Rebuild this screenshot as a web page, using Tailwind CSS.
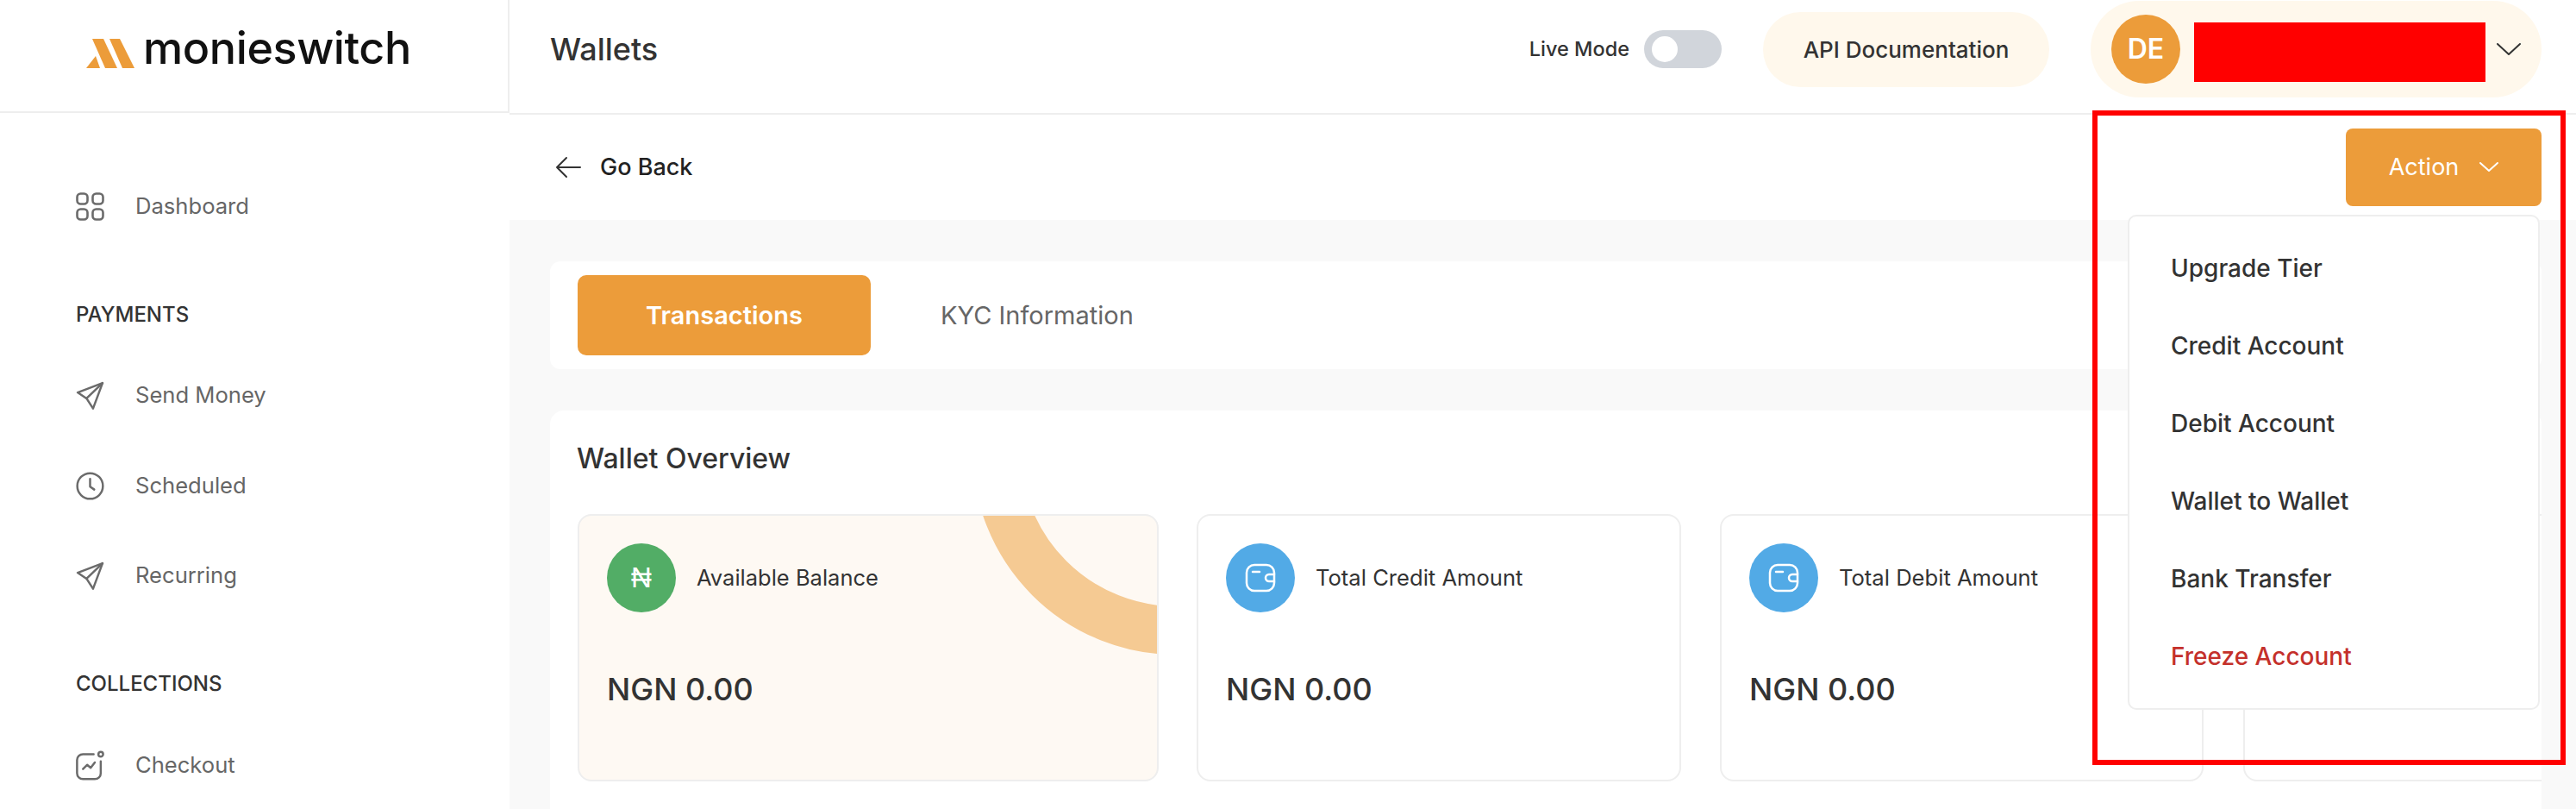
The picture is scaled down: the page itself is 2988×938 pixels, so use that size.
<!DOCTYPE html>
<html lang="en">
<head>
  <meta charset="UTF-8" />
  <title>Monieswitch - Wallets</title>
  <script src="https://cdn.jsdelivr.net/npm/@tailwindcss/browser@4"></script>
</head>
<body class="relative w-[2988px] h-[938px] overflow-hidden bg-white text-[#333333] font-[Inter,sans-serif]">
  <div class="flex h-full">
    <!-- Sidebar -->
    <aside class="w-[591px] shrink-0 flex flex-col">
      <div class="h-[131px] shrink-0 border-b-2 border-r-2 border-[#eeeeee] pl-[100px] flex items-center gap-[10px]">
        <svg width="56" height="34" viewBox="0 0 56 34" class="mt-[-5px]" fill="#ec9c3a"><polygon points="0,34 16,34 11,20" /><polygon points="7,0 20,0 36,34 22,34" /><polygon points="27,0 39,0 56,34 42,34" /></svg>
        <span class="text-[52px] font-medium text-[#111111] leading-none tracking-[-0.4px] mt-[-17px]">monieswitch</span>
      </div>
      <nav class="pl-[88px] pt-[83px] text-[25.6px] text-[#666666]">
        <a class="flex items-center gap-[36px] h-[50px]">
          <svg width="33" height="33" viewBox="0 0 33 33" fill="none" stroke="#6b6b6b" stroke-width="2.6"><rect x="1.5" y="1.5" width="12" height="12" rx="4" /><rect x="19.5" y="1.5" width="12" height="12" rx="4" /><rect x="1.5" y="19.5" width="12" height="12" rx="4" /><rect x="19.5" y="19.5" width="12" height="12" rx="4" /></svg>
          <span>Dashboard</span>
        </a>
        <div class="mt-[81px] h-[40px] flex items-center text-[24px] font-medium text-[#333333]">PAYMENTS</div>
        <a class="mt-[48px] flex items-center gap-[36px] h-[50px]">
          <svg width="33" height="33" viewBox="0 0 24 24" fill="none" stroke="#6b6b6b" stroke-width="1.8" stroke-linejoin="round" stroke-linecap="round"><path d="M22.5 1.5 1.5 9.5l7.5 5 5.5 8.5 8-21.500Z" /><path d="M22.500 1.500 9 14.500" /></svg>
          <span>Send Money</span>
        </a>
        <a class="mt-[55px] flex items-center gap-[36px] h-[50px]">
          <svg width="33" height="33" viewBox="0 0 24 24" fill="none" stroke="#6b6b6b" stroke-width="1.8" stroke-linecap="round" stroke-linejoin="round"><circle cx="12" cy="12" r="10.800" /><path d="M12 6v6.500l3.500 2.500" /></svg>
          <span>Scheduled</span>
        </a>
        <a class="mt-[54px] flex items-center gap-[36px] h-[50px]">
          <svg width="33" height="33" viewBox="0 0 24 24" fill="none" stroke="#6b6b6b" stroke-width="1.8" stroke-linejoin="round" stroke-linecap="round"><path d="M22.5 1.5 1.5 9.5l7.5 5 5.5 8.5 8-21.500Z" /><path d="M22.500 1.500 9 14.500" /></svg>
          <span>Recurring</span>
        </a>
        <div class="mt-[81px] h-[40px] flex items-center text-[24px] font-medium text-[#333333]">COLLECTIONS</div>
        <a class="mt-[49px] flex items-center gap-[36px] h-[50px]">
          <svg width="33" height="35" viewBox="0 0 24 25" fill="none" stroke="#6b6b6b" stroke-width="1.8" stroke-linecap="round" stroke-linejoin="round"><path d="M15 3H6a5 5 0 0 0-5 5v11a5 5 0 0 0 5 5h10a5 5 0 0 0 5-5V9" /><circle cx="21" cy="3" r="2" /><path d="m6 15.500 3.500-3.500 3 2.500 3.500-4.500" /></svg>
          <span>Checkout</span>
        </a>
      </nav>
    </aside>

    <div class="flex-1 min-w-0 flex flex-col">
      <!-- Top bar -->
      <header class="h-[133px] shrink-0 border-b-2 border-[#eeeeee] flex items-start pl-[47px] pr-[40px]">
        <h1 class="text-[36px] font-medium leading-none mt-[39px] text-[#333333]">Wallets</h1>
        <div class="ml-auto flex items-center gap-[48px] h-[114px]">
          <div class="flex items-center gap-[17px]">
            <span class="text-[23.5px] font-medium">Live Mode</span>
            <div class="w-[90px] h-[44px] rounded-full bg-[#d1d5db] flex items-center pl-[9px]">
              <div class="w-[30px] h-[30px] rounded-full bg-white"></div>
            </div>
          </div>
          <button class="w-[332px] h-[87px] rounded-full bg-[#fff8ec] text-[26px] font-medium">API Documentation</button>
          <div class="w-[523px] h-[112px] rounded-full bg-[#fff8ec] flex items-center pl-[24px]">
            <div class="w-[80px] h-[80px] rounded-full bg-[#ec9c3a] text-white text-[32px] font-semibold flex items-center justify-center">DE</div>
            <div class="ml-[16px] mt-[6px] w-[338px] h-[69px] bg-[#ff0000]"></div>
            <svg class="ml-[13px]" width="28" height="14" viewBox="0 0 28 14" fill="none" stroke="#333333" stroke-width="2" stroke-linecap="round" stroke-linejoin="round"><path d="m1 1 13 12L27 1" /></svg>
          </div>
        </div>
      </header>

      <!-- Go back / action row -->
      <div class="h-[122px] shrink-0 flex items-center justify-between pl-[53px] pr-[40px]">
        <a class="flex items-center gap-[22px] text-[27px] font-medium text-[#222222]">
          <svg width="30" height="26" viewBox="0 0 30 26" fill="none" stroke="#333333" stroke-width="2" stroke-linecap="round" stroke-linejoin="round"><path d="M29 13H2M13 2 2 13l11 11" /></svg>
          <span>Go Back</span>
        </a>
        <button class="w-[227px] h-[90px] rounded-[8px] bg-[#ec9c3a] text-white text-[27px] flex items-center justify-center gap-[24px]">
          <span>Action</span>
          <svg width="22" height="12" viewBox="0 0 22 12" fill="none" stroke="#ffffff" stroke-width="2" stroke-linecap="round" stroke-linejoin="round"><path d="m1 1 10 9L21 1" /></svg>
        </button>
      </div>

      <!-- Content -->
      <main class="flex-1 min-h-0 bg-[#f9f9f9] pt-[48px] pl-[47px] pr-[40px]">
        <div class="h-[125px] rounded-[12px] bg-white px-[32px] py-[16px] flex items-center">
          <div class="w-[340px] h-[93px] rounded-[10px] bg-[#ec9c3a] text-white text-[29px] font-semibold flex items-center justify-center">Transactions</div>
          <div class="ml-[81px] text-[29px] text-[#666666]">KYC Information</div>
        </div>
        <section class="mt-[48px] h-[600px] rounded-[16px] bg-white p-[32px] overflow-hidden">
          <h2 class="text-[32px] font-medium leading-[44px] mt-[2px] ml-[-1px]">Wallet Overview</h2>
          <div class="mt-[42px] flex gap-[44px]">
            <div class="relative w-[674px] h-[310px] shrink-0 overflow-hidden rounded-[16px] border-2 border-[#eeeeee] bg-[#fef9f3] px-[32px] pt-[32px]">
              <div class="absolute left-[456px] top-[-311px] w-[472px] h-[472px] rounded-full border-[56px] border-[#f5ca93]"></div>
              <div class="flex items-center gap-[24px]">
                <div class="w-[80px] h-[80px] rounded-full bg-[#52ad66] text-white text-[33px] font-['Liberation_Sans',sans-serif] flex items-center justify-center">₦</div>
                <span class="text-[25.5px]">Available Balance</span>
              </div>
              <div class="mt-[66px] text-[36px] font-medium leading-[46px]">NGN 0.00</div>
            </div>
            <div class="w-[562px] h-[310px] shrink-0 rounded-[16px] border-2 border-[#eeeeee] bg-white px-[32px] pt-[32px]">
              <div class="flex items-center gap-[24px]">
                <div class="w-[80px] h-[80px] rounded-full bg-[#52aae6] flex items-center justify-center">
                  <svg width="36" height="34" viewBox="0 0 36 34" fill="none" stroke="#ffffff" stroke-width="2.500" stroke-linecap="round" stroke-linejoin="round"><rect x="2" y="2" width="32" height="30" rx="9" /><path d="M9 10h8" /><path d="M34 13h-6a4 4 0 0 0 0 8h6" /></svg>
                </div>
                <span class="text-[25.6px]">Total Credit Amount</span>
              </div>
              <div class="mt-[66px] text-[36px] font-medium leading-[46px]">NGN 0.00</div>
            </div>
            <div class="ml-[1px] w-[561px] h-[310px] shrink-0 rounded-[16px] border-2 border-[#eeeeee] bg-white px-[32px] pt-[32px]">
              <div class="flex items-center gap-[24px]">
                <div class="w-[80px] h-[80px] rounded-full bg-[#52aae6] flex items-center justify-center">
                  <svg width="36" height="34" viewBox="0 0 36 34" fill="none" stroke="#ffffff" stroke-width="2.500" stroke-linecap="round" stroke-linejoin="round"><rect x="2" y="2" width="32" height="30" rx="9" /><path d="M9 10h8" /><path d="M34 13h-6a4 4 0 0 0 0 8h6" /></svg>
                </div>
                <span class="text-[25.6px]">Total Debit Amount</span>
              </div>
              <div class="mt-[66px] text-[36px] font-medium leading-[46px]">NGN 0.00</div>
            </div>
            <div class="ml-[2px] w-[562px] h-[310px] shrink-0 rounded-[16px] border-2 border-[#eeeeee] bg-white"></div>
          </div>
        </section>
      </main>
    </div>
  </div>

  <!-- Action dropdown -->
  <div class="absolute left-[2468px] top-[249px] w-[478px] h-[574px] rounded-[10px] border-2 border-[#eeeeee] bg-white flex flex-col pt-[15px] pl-[48px] text-[28px] font-medium text-[#333333]">
    <a class="h-[90px] flex items-center">Upgrade Tier</a>
    <a class="h-[90px] flex items-center">Credit Account</a>
    <a class="h-[90px] flex items-center">Debit Account</a>
    <a class="h-[90px] flex items-center">Wallet to Wallet</a>
    <a class="h-[90px] flex items-center">Bank Transfer</a>
    <a class="h-[90px] flex items-center text-[#c4302b]">Freeze Account</a>
  </div>

  <!-- Red highlight drawn over the screenshot -->
  <div class="absolute left-[2427px] top-[128px] w-[549px] h-[759px] border-[6px] border-[#ff0000]"></div>
</body>
</html>
